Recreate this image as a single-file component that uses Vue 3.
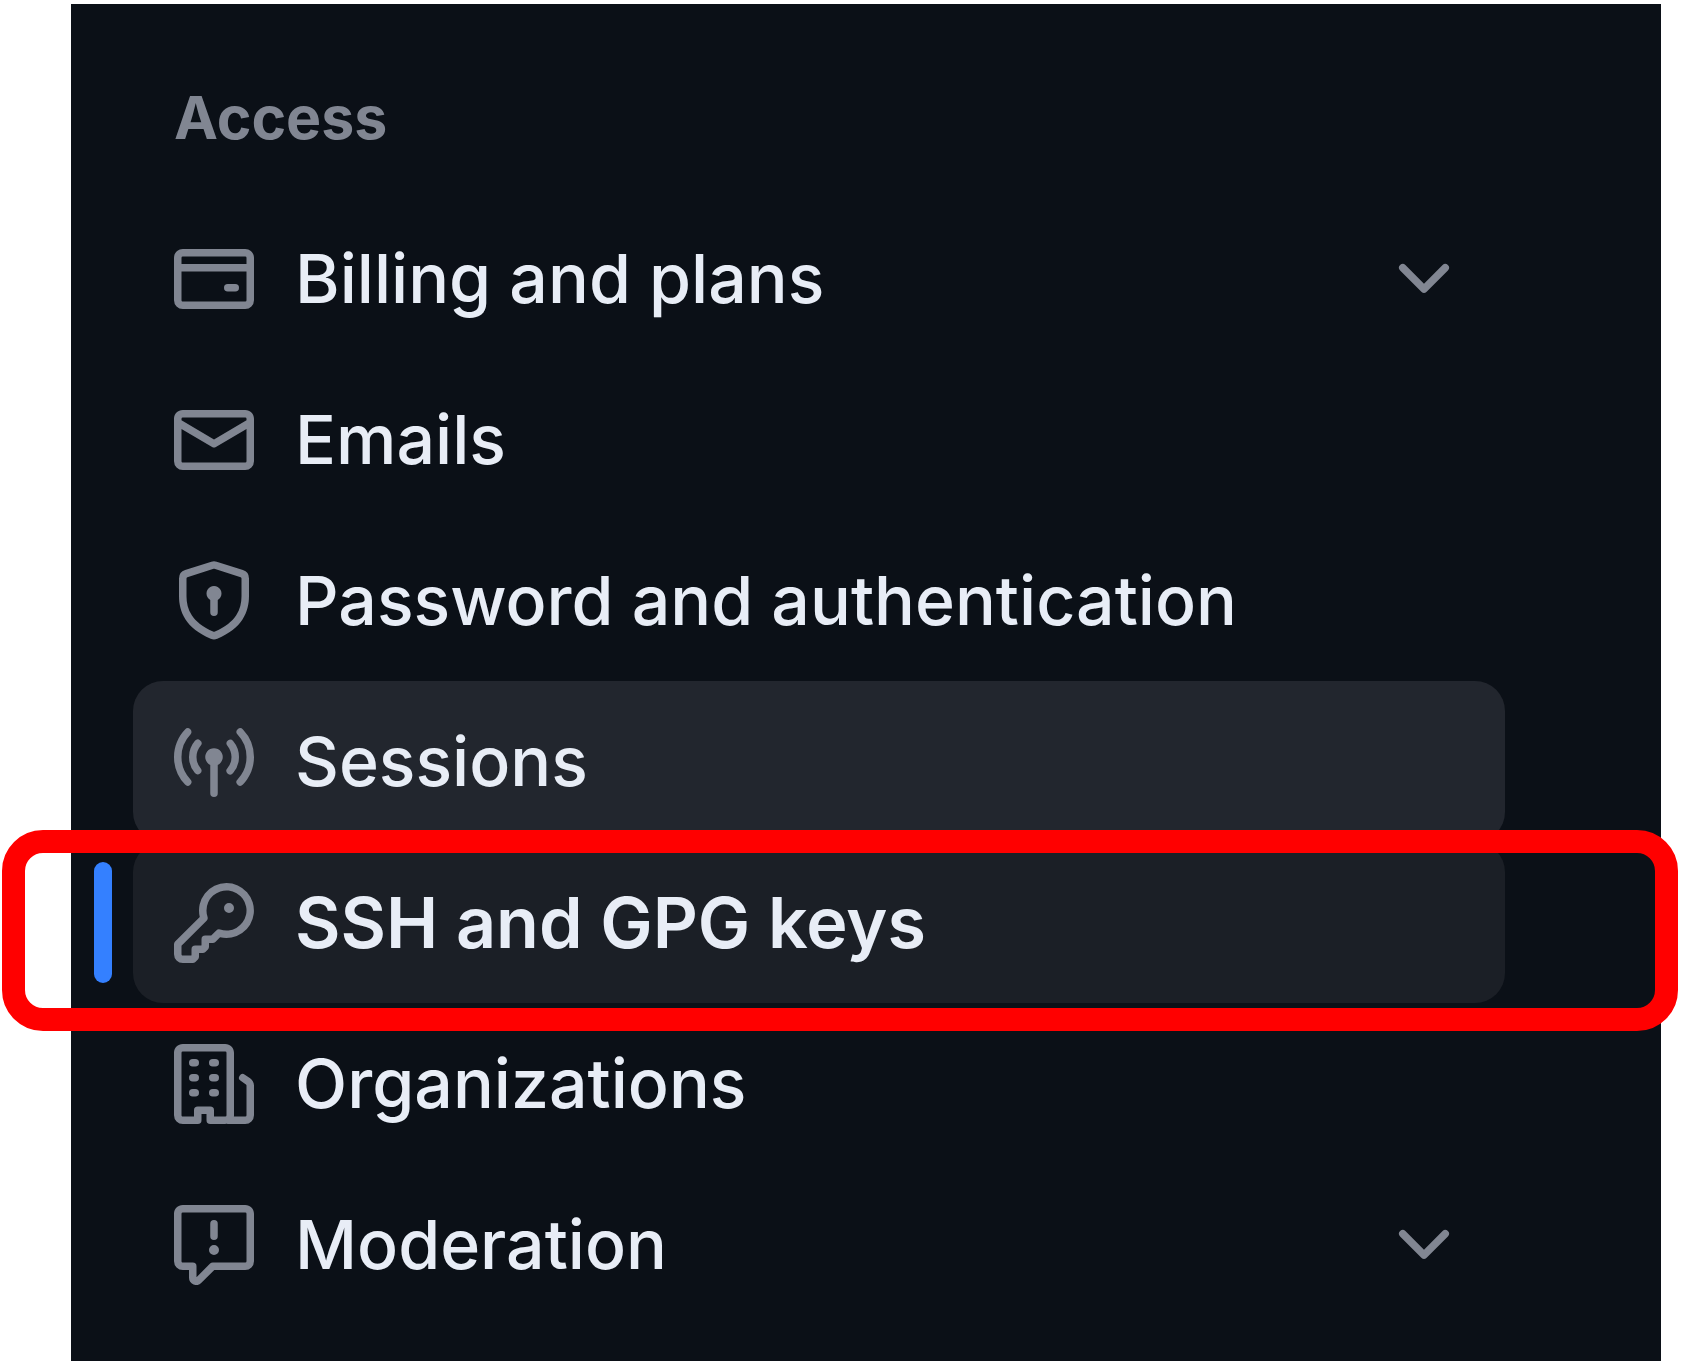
<script setup>
const chevron =
  'M12.78 5.22a.749.749 0 0 1 0 1.06l-4.25 4.25a.749.749 0 0 1-1.06 0L3.22 6.28a.749.749 0 1 1 1.06-1.06L8 8.939l3.72-3.719a.749.749 0 0 1 1.06 0Z'

const items = [
  {
    label: 'Billing and plans',
    expandable: true,
    icon: 'M10.75 9a.75.75 0 0 0 0 1.5h1.5a.75.75 0 0 0 0-1.5h-1.5ZM0 3.75C0 2.784.784 2 1.75 2h12.5c.966 0 1.75.784 1.75 1.75v8.5A1.75 1.75 0 0 1 14.25 14H1.75A1.75 1.75 0 0 1 0 12.25ZM14.5 6.5h-13v5.75c0 .138.112.25.25.25h12.5a.25.25 0 0 0 .25-.25Zm0-2.75a.25.25 0 0 0-.25-.25H1.75a.25.25 0 0 0-.25.25V5h13Z',
  },
  {
    label: 'Emails',
    icon: 'M1.75 2h12.5c.966 0 1.75.784 1.75 1.75v8.5A1.75 1.75 0 0 1 14.25 14H1.75A1.75 1.75 0 0 1 0 12.25v-8.5C0 2.784.784 2 1.75 2ZM1.5 12.251c0 .138.112.25.25.25h12.5a.25.25 0 0 0 .25-.25V5.809L8.38 9.397a.75.75 0 0 1-.76 0L1.5 5.809v6.442Zm13-8.181v-.32a.25.25 0 0 0-.25-.25H1.75a.25.25 0 0 0-.25.25v.32L8 7.88Z',
  },
  {
    label: 'Password and authentication',
    icon: 'm8.533.133 5.25 1.68A1.75 1.75 0 0 1 15 3.48V7c0 1.566-.32 3.182-1.303 4.682-.983 1.498-2.585 2.813-5.032 3.855a1.697 1.697 0 0 1-1.33 0c-2.447-1.042-4.049-2.357-5.032-3.855C1.32 10.182 1 8.566 1 7V3.48a1.75 1.75 0 0 1 1.217-1.667l5.25-1.68a1.748 1.748 0 0 1 1.066 0Zm-.61 1.429.001.001-5.25 1.68a.251.251 0 0 0-.174.237V7c0 1.36.275 2.666 1.057 3.859.784 1.194 2.121 2.342 4.366 3.298a.196.196 0 0 0 .154 0c2.245-.957 3.582-2.103 4.366-3.297C13.225 9.666 13.5 8.358 13.5 7V3.48a.25.25 0 0 0-.174-.238l-5.25-1.68a.25.25 0 0 0-.153 0ZM9.5 6.5c0 .536-.286 1.032-.75 1.3v2.45a.75.75 0 0 1-1.5 0V7.8A1.5 1.5 0 1 1 9.5 6.5Z',
  },
  {
    label: 'Sessions',
    state: 'hovered',
    icon: 'M8.75 8.582v5.668a.75.75 0 0 1-1.5 0V8.582a1.75 1.75 0 1 1 1.5 0Zm3.983-7.125a.75.75 0 0 1 1.06.026A7.976 7.976 0 0 1 16 7c0 2.139-.84 4.083-2.207 5.517a.75.75 0 1 1-1.086-1.034A6.474 6.474 0 0 0 14.5 7a6.474 6.474 0 0 0-1.793-4.483.75.75 0 0 1 .026-1.06Zm-9.466 0c.3.286.312.76.026 1.06A6.474 6.474 0 0 0 1.5 7a6.47 6.47 0 0 0 1.793 4.483.75.75 0 0 1-1.086 1.034A7.973 7.973 0 0 1 0 7c0-2.139.84-4.083 2.207-5.517a.75.75 0 0 1 1.06-.026Zm8.556 2.321A4.988 4.988 0 0 1 13 7a4.988 4.988 0 0 1-1.177 3.222.75.75 0 1 1-1.146-.967A3.487 3.487 0 0 0 11.5 7c0-.86-.309-1.645-.823-2.255a.75.75 0 0 1 1.146-.967Zm-6.492.958A3.48 3.48 0 0 0 4.5 7a3.48 3.48 0 0 0 .823 2.255.75.75 0 0 1-1.146.967A4.981 4.981 0 0 1 3 7a4.982 4.982 0 0 1 1.188-3.236.75.75 0 1 1 1.143.972Z',
  },
  {
    label: 'SSH and GPG keys',
    state: 'current',
    icon: 'M10.5 0a5.499 5.499 0 1 1-1.288 10.848l-.932.932a.749.749 0 0 1-.53.22H7v.75a.749.749 0 0 1-.22.53l-.5.5a.749.749 0 0 1-.53.22H5v.75a.749.749 0 0 1-.22.53l-.5.5a.749.749 0 0 1-.53.22h-2A1.75 1.75 0 0 1 0 14.25v-2c0-.199.079-.389.22-.53l4.932-4.932A5.5 5.5 0 0 1 10.5 0Zm-4 5.5c-.001.431.069.86.205 1.269a.75.75 0 0 1-.181.768L1.5 12.56v1.69c0 .138.112.25.25.25h1.69l.06-.06v-1.19a.75.75 0 0 1 .75-.75h1.19l.06-.06v-1.19a.75.75 0 0 1 .75-.75h1.19l1.023-1.025a.75.75 0 0 1 .768-.18A4 4 0 1 0 6.5 5.5ZM11 6a1 1 0 1 1 0-2 1 1 0 0 1 0 2Z',
  },
  {
    label: 'Organizations',
    icon: 'M1.75 16A1.75 1.75 0 0 1 0 14.25V1.75C0 .784.784 0 1.75 0h8.5C11.216 0 12 .784 12 1.75v12.5c0 .085-.006.168-.018.25h2.268a.25.25 0 0 0 .25-.25V8.285a.25.25 0 0 0-.111-.208l-1.055-.703a.749.749 0 1 1 .832-1.248l1.055.703c.487.325.779.871.779 1.456v5.965A1.75 1.75 0 0 1 14.25 16h-3.5a.766.766 0 0 1-.197-.026c-.099.017-.2.026-.303.026h-3a.75.75 0 0 1-.75-.75V14h-1v1.25a.75.75 0 0 1-.75.75Zm-.25-1.75c0 .138.112.25.25.25H4v-1.25a.75.75 0 0 1 .75-.75h2.5a.75.75 0 0 1 .75.75v1.25h2.25a.25.25 0 0 0 .25-.25V1.75a.25.25 0 0 0-.25-.25h-8.5a.25.25 0 0 0-.25.25ZM3.75 6h.5a.75.75 0 0 1 0 1.5h-.5a.75.75 0 0 1 0-1.5ZM3 3.75A.75.75 0 0 1 3.75 3h.5a.75.75 0 0 1 0 1.5h-.5A.75.75 0 0 1 3 3.75Zm4 3A.75.75 0 0 1 7.75 6h.5a.75.75 0 0 1 0 1.5h-.5A.75.75 0 0 1 7 6.75ZM7.75 3h.5a.75.75 0 0 1 0 1.5h-.5a.75.75 0 0 1 0-1.5ZM3 9.75A.75.75 0 0 1 3.75 9h.5a.75.75 0 0 1 0 1.5h-.5A.75.75 0 0 1 3 9.75ZM7.75 9h.5a.75.75 0 0 1 0 1.5h-.5a.75.75 0 0 1 0-1.5Z',
  },
  {
    label: 'Moderation',
    expandable: true,
    icon: 'M0 1.75C0 .784.784 0 1.75 0h12.5C15.216 0 16 .784 16 1.75v9.5A1.75 1.75 0 0 1 14.25 13H8.06l-2.573 2.573A1.458 1.458 0 0 1 3 14.543V13H1.75A1.75 1.75 0 0 1 0 11.25Zm1.75-.25a.25.25 0 0 0-.25.25v9.5c0 .138.112.25.25.25h2a.75.75 0 0 1 .75.75v2.19l2.72-2.72a.749.749 0 0 1 .53-.22h6.5a.25.25 0 0 0 .25-.25v-9.5a.25.25 0 0 0-.25-.25Zm7 2.25v2.5a.75.75 0 0 1-1.5 0v-2.5a.75.75 0 0 1 1.5 0ZM9 9a1 1 0 1 1-2 0 1 1 0 0 1 2 0Z',
  },
]
</script>

<template>
  <nav class="panel" aria-labelledby="access-heading">
    <h2 id="access-heading" class="heading">Access</h2>
    <ul class="list">
      <li v-for="item in items" :key="item.label" class="entry">
        <component
          :is="item.expandable ? 'button' : 'a'"
          class="row"
          :class="item.state"
          :href="item.expandable ? undefined : '#'"
          :type="item.expandable ? 'button' : undefined"
          :aria-expanded="item.expandable ? 'false' : undefined"
          :aria-current="item.state === 'current' ? 'page' : undefined"
        >
          <svg class="icon" viewBox="0 0 16 16" aria-hidden="true"><path :d="item.icon" /></svg>
          <span class="label">{{ item.label }}</span>
          <svg v-if="item.expandable" class="icon" viewBox="0 0 16 16" aria-hidden="true">
            <path :d="chevron" />
          </svg>
        </component>
        <span v-if="item.state === 'current'" class="callout" aria-hidden="true"></span>
      </li>
    </ul>
  </nav>
</template>

<style>
body {
  margin: 0;
  background: #ffffff;
}
</style>

<style scoped>
.panel {
  margin: 4px 21px 4px 71px;
  padding: 69px 156px 36px 62px;
  background: #0b1017;
  font-family: Inter, "Noto Sans", sans-serif;
}

.heading {
  margin: 0 0 35px;
  padding-left: 41px;
  color: #818692;
  font-size: 59px;
  font-weight: 700;
  line-height: 90px;
}

.list {
  margin: 0;
  padding: 0;
  list-style: none;
}

.entry {
  position: relative;
}

.row {
  display: flex;
  align-items: center;
  gap: 41px;
  box-sizing: border-box;
  width: 100%;
  padding: 28px 41px;
  border: 0;
  border-radius: 30px;
  background: transparent;
  color: #e8edf6;
  font-family: inherit;
  font-size: 68px;
  font-weight: 500;
  line-height: 105px;
  text-align: left;
  text-decoration: none;
  white-space: nowrap;
}

.row.hovered {
  background: #22262e;
}

.row.current {
  background: #1b1f26;
  font-size: 70px;
  font-weight: 600;
}

.row.current::before {
  content: "";
  position: absolute;
  top: 20px;
  bottom: 20px;
  left: -39px;
  width: 18px;
  border-radius: 9px;
  background: #3480ff;
}

.icon {
  flex: none;
  width: 80px;
  height: 80px;
  fill: #818692;
}

.label {
  flex: 1;
}

.callout {
  position: absolute;
  z-index: 1;
  top: -12px;
  right: -173px;
  bottom: -28px;
  left: -131px;
  border: 23px solid #ff0000;
  border-radius: 41px;
  pointer-events: none;
}
</style>
